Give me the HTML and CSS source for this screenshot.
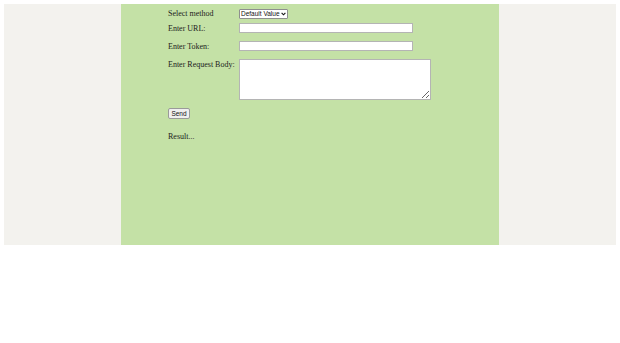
FILE: index.html
```html
<!DOCTYPE html>
<html>
<head>
<meta charset="utf-8">
<link rel="stylesheet" href="styles.css">
</head>
<body>
<div class="page">
  <div class="panel">
    <div class="row row-select">
      <label class="label">Select method</label>
      <div class="select-box">
        <select class="select"><option>Default Value</option></select>
        <svg class="chev" width="5" height="4" viewBox="0 0 5 4"><path d="M0.6 0.8 L2.5 2.8 L4.4 0.8" fill="none" stroke="#111" stroke-width="1.1"/></svg>
      </div>
    </div>
    <div class="row row-url">
      <label class="label">Enter URL:</label>
      <input class="field" type="text">
    </div>
    <div class="row row-token">
      <label class="label">Enter Token:</label>
      <input class="field" type="text">
    </div>
    <div class="row row-body">
      <label class="label">Enter Request Body:</label>
      <textarea class="area"></textarea>
    </div>
    <button class="send">Send</button>
    <div class="result">Result...</div>
  </div>
</div>
</body>
</html>
```
FILE: styles.css
```css
html, body {
  margin: 0;
  padding: 0;
}
body {
  padding: 4px;
  background: #ffffff;
  font-family: "Liberation Serif", "Times New Roman", serif;
  font-size: 8px;
  color: #1c1c1c;
}
.page {
  display: flex;
  justify-content: center;
  background: #f3f2ee;
  height: 241px;
}
.panel {
  width: 378px;
  background: #c4e1a6;
  padding: 5px 0 0 47px;
  box-sizing: border-box;
}
.row {
  display: flex;
  align-items: flex-start;
}
.label {
  width: 71px;
  line-height: 10px;
  height: 10px;
  flex: none;
}
.row-url .label,
.row-token .label,
.row-body .label {
  line-height: 12px;
}
.row-select {
  margin-bottom: 4px;
}
.row-url,
.row-token,
.row-body {
  margin-bottom: 8px;
}
.select-box {
  display: inline-flex;
  align-items: center;
  width: 49px;
  height: 10px;
  box-sizing: border-box;
  border: 1px solid #8f8f8f;
  border-radius: 1px;
  background: #fff;
  padding: 0 1px 0 1px;
}
.select {
  appearance: none;
  -webkit-appearance: none;
  border: none;
  background: transparent;
  font-family: "Liberation Sans", Arial, sans-serif;
  font-size: 6.5px;
  color: #111;
  padding: 0;
  margin: 0;
  width: 42px;
  height: 8px;
  line-height: 8px;
  outline: none;
}
.chev {
  flex: none;
}
.field {
  width: 174px;
  height: 10px;
  box-sizing: border-box;
  border: 1px solid #b4b4b4;
  background: #fff;
  padding: 0;
  margin: 0;
}
.area {
  width: 192px;
  height: 41px;
  box-sizing: border-box;
  border: 1px solid #b4b4b4;
  background: #fff;
  padding: 0;
  margin: 0;
  resize: both;
}
.send {
  display: block;
  width: 22px;
  height: 11px;
  box-sizing: border-box;
  padding: 0;
  margin: 0;
  border: 1px solid #9a9a9a;
  border-radius: 2px;
  background: #efefef;
  font-family: "Liberation Sans", Arial, sans-serif;
  font-size: 6.5px;
  color: #111;
  line-height: 9px;
}
.result {
  margin-top: 13px;
  line-height: 10px;
}
```
